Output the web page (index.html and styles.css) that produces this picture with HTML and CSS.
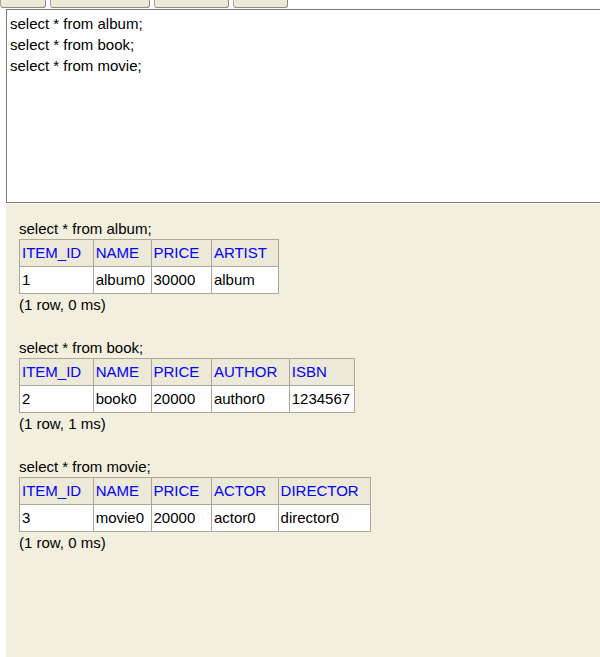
FILE: index.html
```
<!DOCTYPE html>
<html>
<head>
<meta charset="utf-8">
<link rel="stylesheet" href="styles.css">
</head>
<body>
<div class="toolbar">
  <span class="btn b1"></span>
  <span class="btn b2"></span>
  <span class="btn b3"></span>
  <span class="btn b4"></span>
</div>
<div class="editor">
  <div class="line">select * from album;</div>
  <div class="line">select * from book;</div>
  <div class="line">select * from movie;</div>
</div>
<div class="results">
  <div class="block">
    <div class="stmt">select * from album;</div>
    <table class="rs">
      <tr><th>ITEM_ID</th><th>NAME</th><th>PRICE</th><th>ARTIST</th></tr>
      <tr><td>1</td><td>album0</td><td>30000</td><td>album</td></tr>
    </table>
    <div class="stmt">(1 row, 0 ms)</div>
  </div>
  <div class="block">
    <div class="stmt">select * from book;</div>
    <table class="rs">
      <tr><th>ITEM_ID</th><th>NAME</th><th>PRICE</th><th>AUTHOR</th><th>ISBN</th></tr>
      <tr><td>2</td><td>book0</td><td>20000</td><td>author0</td><td>1234567</td></tr>
    </table>
    <div class="stmt">(1 row, 1 ms)</div>
  </div>
  <div class="block">
    <div class="stmt">select * from movie;</div>
    <table class="rs">
      <tr><th>ITEM_ID</th><th>NAME</th><th>PRICE</th><th>ACTOR</th><th>DIRECTOR</th></tr>
      <tr><td>3</td><td>movie0</td><td>20000</td><td>actor0</td><td>director0</td></tr>
    </table>
    <div class="stmt">(1 row, 0 ms)</div>
  </div>
</div>
</body>
</html>
```
FILE: styles.css
```
html, body {
  margin: 0;
  padding: 0;
  height: 100%;
  overflow: hidden;
  background: #fff;
}
body {
  display: flex;
  flex-direction: column;
  font-family: "Liberation Sans", Arial, sans-serif;
  font-size: 15px;
  color: #000;
}
.toolbar {
  display: flex;
  gap: 4px;
  height: 8px;
  margin-bottom: 1px;
}
.btn {
  display: block;
  height: 7px;
  background: #ece9d8;
  border: 1px solid #aca899;
  border-top: none;
  border-bottom-color: #8e8b7c;
  border-right-color: #8e8b7c;
  border-radius: 0 0 3px 3px;
  box-sizing: content-box;
}
.b1 { width: 44px; }
.b2 { width: 98px; }
.b3 { width: 73px; }
.b4 { width: 53px; }
.editor {
  margin-left: 6px;
  border: 1px solid #7a7a7a;
  border-right: none;
  padding: 3px 3px;
  box-sizing: border-box;
  height: 194px;
  background: #fff;
}
.line {
  line-height: 21px;
}
.results {
  flex: 1;
  margin-left: 6px;
  margin-top: 1px;
  background: #f3efdf;
  padding: 16px 0 0 13px;
}
.block {
  margin-bottom: 25px;
}
.stmt {
  line-height: 18px;
}
.rs {
  border-collapse: collapse;
  margin: 1px 0 2px;
}
.rs th, .rs td {
  border: 1px solid #aca899;
  text-align: left;
  line-height: 18px;
  padding: 4px 4px 4px 2px;
  font-weight: normal;
  white-space: nowrap;
}
.rs th {
  background: #ece9d8;
  color: #0000ff;
  padding-right: 11.5px;
}
.rs td {
  background: #fff;
}
```
